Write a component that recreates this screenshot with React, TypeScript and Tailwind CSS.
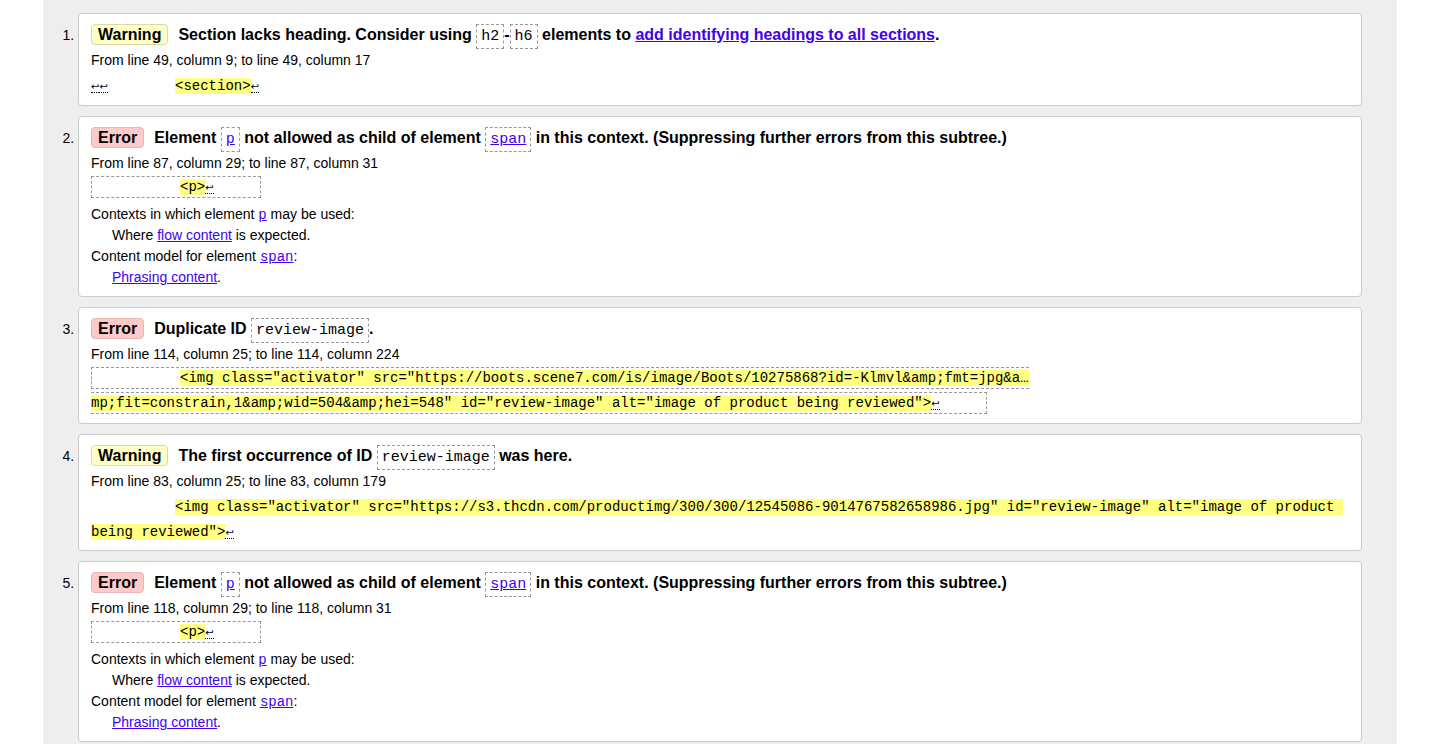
import type { ReactNode } from 'react';

function Badge({ kind }: { kind: 'Warning' | 'Error' }) {
  const tone =
    kind === 'Warning'
      ? 'bg-[#ffffc8] border-[#d9d9a8]'
      : 'bg-[#ffcaca] border-[#e8b4b4]';
  return (
    <span className={`inline-block rounded-[4px] border px-[6px] leading-[19px] mr-[10px] ${tone}`}>
      {kind}
    </span>
  );
}

function Code({ children }: { children: ReactNode }) {
  return (
    <code className="font-['Liberation_Mono',monospace] font-normal text-[15px] leading-none border border-dashed border-[#999999] px-[4px] py-[3px]">
      {children}
    </code>
  );
}

function Link({ children, mono }: { children: ReactNode; mono?: boolean }) {
  return (
    <a
      href="#"
      className={`text-[#4200f0] underline ${mono ? "font-['Liberation_Mono',monospace] leading-none" : ''}`}
    >
      {children}
    </a>
  );
}

function Hi({ children }: { children: ReactNode }) {
  return <span className="bg-[#ffff80]">{children}</span>;
}

function Arrow() {
  return (
    <span className="font-['DejaVu_Sans',sans-serif] text-[10px] leading-none border-b border-dotted border-black">
      ↩
    </span>
  );
}

function Card({
  kind,
  title,
  location,
  children,
  extra,
  codeGap = 'mt-[2px]',
  bottom = 'pb-2',
}: {
  kind: 'Warning' | 'Error';
  title: ReactNode;
  location: string;
  children: ReactNode;
  extra?: ReactNode;
  codeGap?: string;
  bottom?: string;
}) {
  return (
    <li className={`bg-white border border-[#cccccc] rounded-[4px] px-3 pt-[8px] mb-[10px] ${bottom}`}>
      <p className="text-[16px] font-bold leading-[26px]">
        <Badge kind={kind} />
        {title}
      </p>
      <p className="mt-[2px] leading-[20px]">{location}</p>
      <p className={`leading-[25px] whitespace-pre font-['Liberation_Mono',monospace] ${codeGap}`}>
        {children}
      </p>
      {extra}
    </li>
  );
}

function ContextInfo() {
  return (
    <div className="mt-1 leading-[21px]">
      <p>
        Contexts in which element <Link mono>p</Link> may be used:
      </p>
      <p className="pl-[21px]">
        Where <Link>flow content</Link> is expected.
      </p>
      <p>
        Content model for element <Link mono>span</Link>:
      </p>
      <p className="pl-[21px]">
        <Link>Phrasing content</Link>.
      </p>
    </div>
  );
}

function PExtract() {
  return (
    <span className="border border-dashed border-[#999999] px-[4px] py-[2px]">
      {'          '}
      <Hi>{'<p>'}</Hi>
      <Arrow />
      {'     '}
    </span>
  );
}

const pTitle = (
  <>
    Element{' '}
    <Code>
      <Link mono>p</Link>
    </Code>{' '}
    not allowed as child of element{' '}
    <Code>
      <Link mono>span</Link>
    </Code>{' '}
    in this context. (Suppressing further errors from this subtree.)
  </>
);

export default function App() {
  return (
    <div className="h-screen overflow-hidden bg-white font-['Liberation_Sans',Arial,sans-serif] text-[14px] text-black">
      <div className="ml-[43px] mr-[42px] h-full bg-[#eeeeee] px-[35px] pt-[13px]">
        <ol className="list-decimal">
          <Card
            kind="Warning"
            location="From line 49, column 9; to line 49, column 17"
            codeGap="mt-[4px]"
            bottom="pb-[6px]"
            title={
              <>
                Section lacks heading. Consider using <Code>h2</Code>-<Code>h6</Code> elements to{' '}
                <Link>add identifying headings to all sections</Link>.
              </>
            }
          >
            <Arrow />
            <Arrow />
            {'        '}
            <Hi>{'<section>'}</Hi>
            <Arrow />
          </Card>

          <Card
            kind="Error"
            location="From line 87, column 29; to line 87, column 31"
            title={pTitle}
            extra={<ContextInfo />}
          >
            <PExtract />
          </Card>

          <Card
            kind="Error"
            location="From line 114, column 25; to line 114, column 224"
            bottom="pb-[7px]"
            title={
              <>
                Duplicate ID <Code>review-image</Code>.
              </>
            }
          >
            <span className="border border-dashed border-[#999999] px-[4px] py-[2px]">
              {'          '}
              <Hi>
                {'<img class="activator" src="https://boots.scene7.com/is/image/Boots/10275868?id=-Klmvl&amp;fmt=jpg&a…'}
              </Hi>
              <br />
              <Hi>
                {'mp;fit=constrain,1&amp;wid=504&amp;hei=548" id="review-image" alt="image of product being reviewed">'}
              </Hi>
              <Arrow />
              {'     '}
            </span>
          </Card>

          <Card
            kind="Warning"
            location="From line 83, column 25; to line 83, column 179"
            codeGap="mt-[4px]"
            bottom="pb-[5px]"
            title={
              <>
                The first occurrence of ID <Code>review-image</Code> was here.
              </>
            }
          >
            {'          '}
            <Hi>
              {'<img class="activator" src="https://s3.thcdn.com/productimg/300/300/12545086-9014767582658986.jpg" id="review-image" alt="image of product '}
            </Hi>
            <br />
            <Hi>{'being reviewed">'}</Hi>
            <Arrow />
          </Card>

          <Card
            kind="Error"
            location="From line 118, column 29; to line 118, column 31"
            title={pTitle}
            extra={<ContextInfo />}
          >
            <PExtract />
          </Card>
        </ol>
      </div>
    </div>
  );
}
